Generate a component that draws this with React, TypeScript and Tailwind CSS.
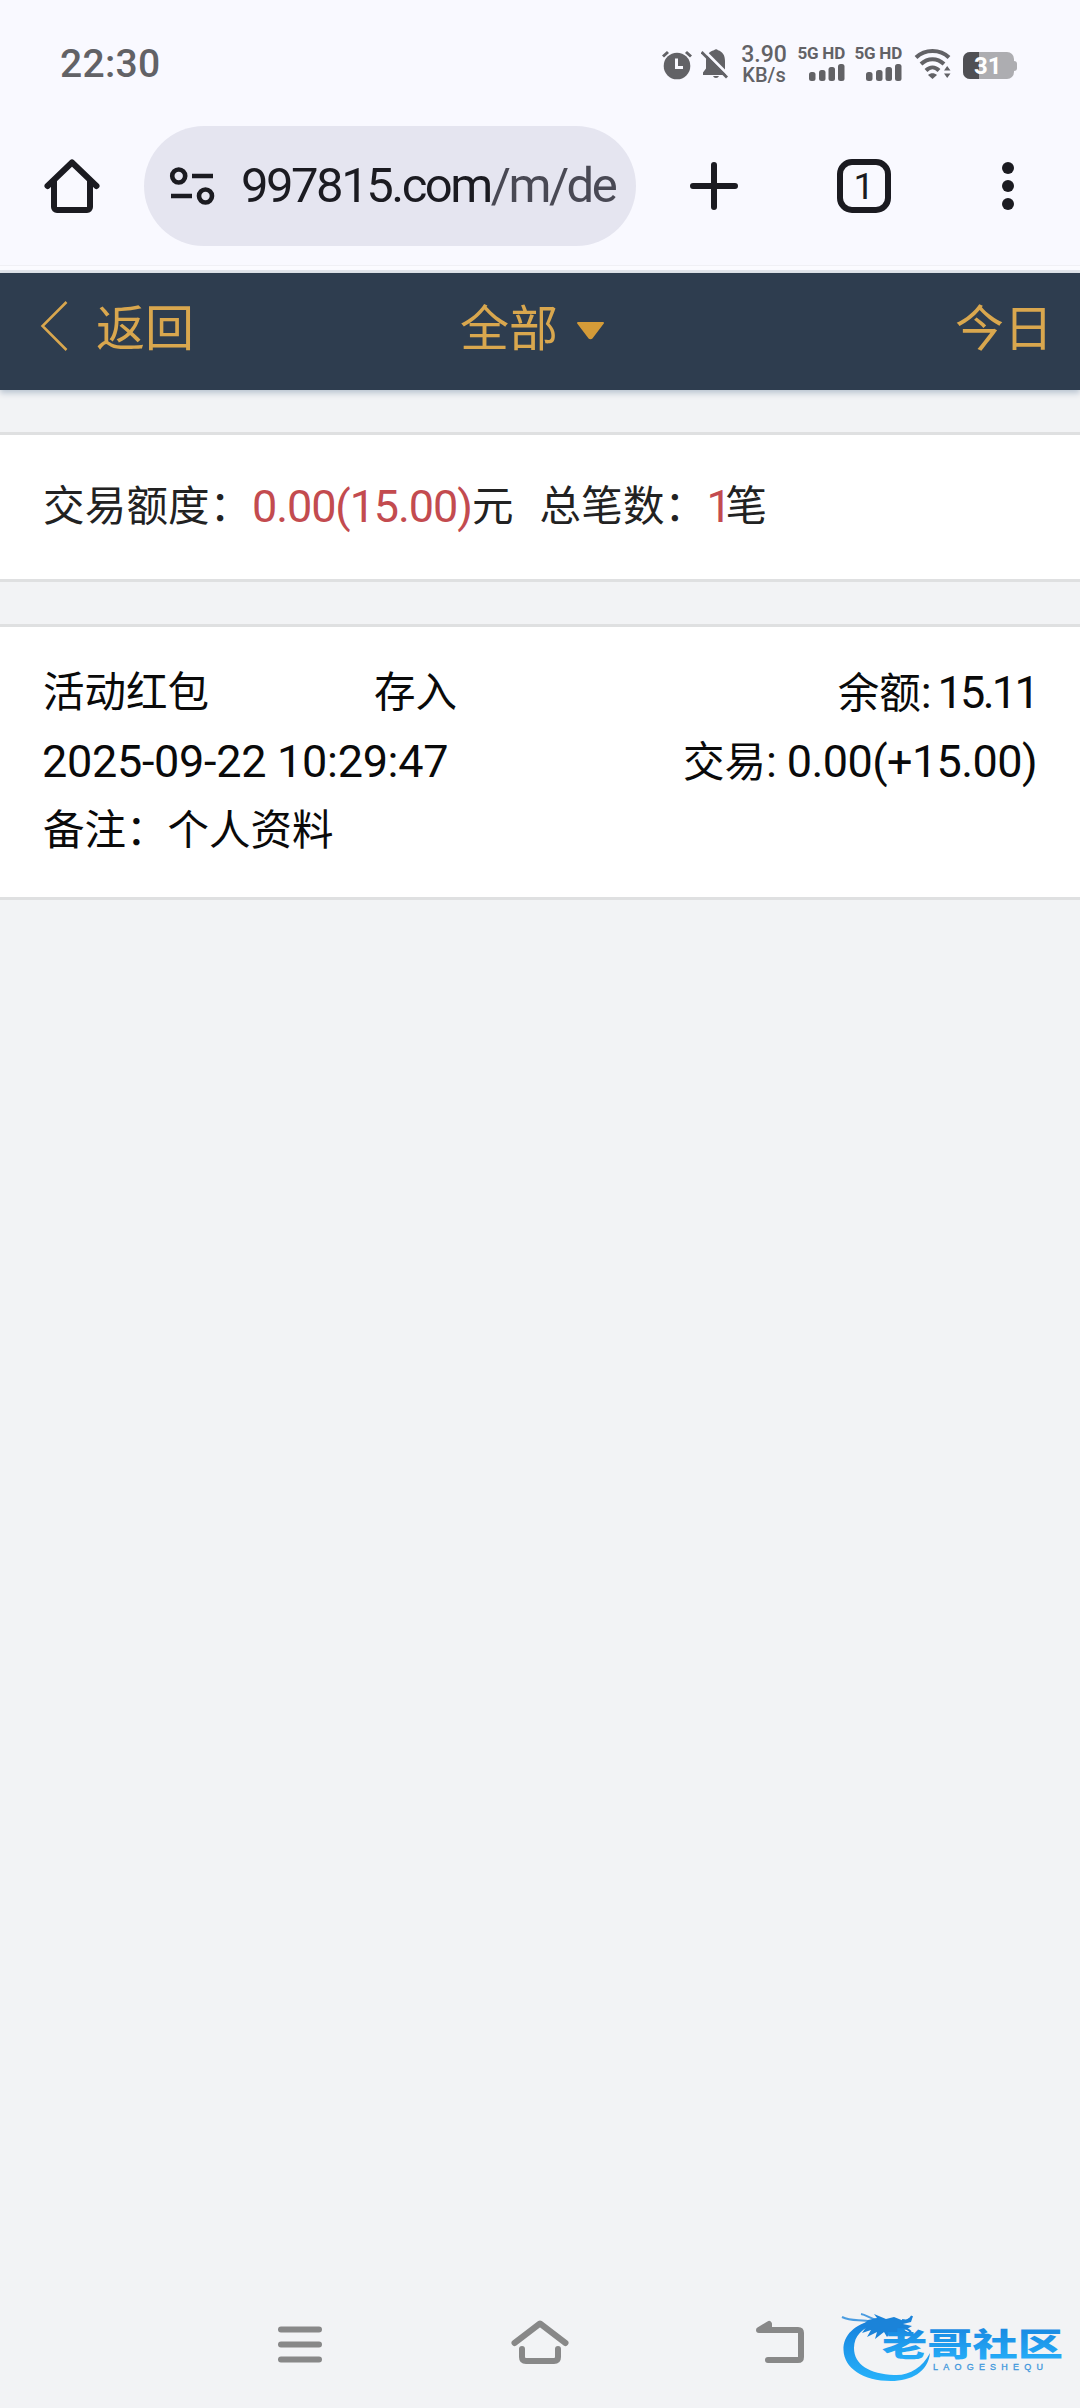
import type { ReactNode } from "react";

type Transaction = {
  type: string;
  direction: string;
  balance: string;
  time: string;
  amount: string;
  remark: string;
};

const transactions: Transaction[] = [
  {
    type: "活动红包",
    direction: "存入",
    balance: "15.11",
    time: "2025-09-22 10:29:47",
    amount: "0.00(+15.00)",
    remark: "个人资料",
  },
];

function App() {
  return (
    <main className="flex h-[2408px] w-[1080px] flex-col overflow-hidden bg-[#f2f3f5] font-[Roboto,'Noto_Sans_CJK_SC',sans-serif]">
      <StatusBar />
      <BrowserBar />
      <PageHeader />
      <Summary />
      {transactions.map((t) => (
        <TransactionRow key={t.time} item={t} />
      ))}
      <NavigationBar />
    </main>
  );
}

function StatusBar() {
  return (
    <div className="flex h-[126px] shrink-0 items-start bg-[#f9f9ff] pl-[60px] text-[#626266]">
      <span className="mt-[41px] w-[602px] text-[39px] leading-[46px] font-medium tracking-[0.3px]">22:30</span>
      <svg className="mt-[50px]" width="30" height="30" viewBox="0 0 30 30">
        <circle cx="15" cy="16" r="13.3" fill="currentColor" />
        <path d="M1 6.5 6 2M29 6.5 24 2" stroke="currentColor" strokeWidth="3" />
        <path d="M14.5 8.5v9H21" fill="none" stroke="#f9f9ff" strokeWidth="3" />
      </svg>
      <svg className="mt-[48px] ml-[9px]" width="28" height="32" viewBox="0 0 28 32">
        <path
          d="M12 28h6a3.2 3.2 0 0 1-6 0ZM2 27v-2.500l3-4V13C5 7 8.500 3 13 2.200c1.500-1.300 3-1 4 0C21.500 3.500 24 7 24 13v10l1 4Z"
          fill="currentColor"
        />
        <path d="M2.500 2 28 27.500" stroke="#f9f9ff" strokeWidth="3" />
        <path d="M.500 4 26 29.500" stroke="currentColor" strokeWidth="2.800" />
      </svg>
      <div className="mt-[44px] ml-[11px] flex w-[48px] flex-col items-center font-medium">
        <span className="text-[23px] leading-[21px]">3.90</span>
        <span className="text-[20px] leading-[21px]">KB/s</span>
      </div>
      <Signal />
      <Signal />
      <svg className="mt-[48px] ml-[12px]" width="38" height="32" viewBox="0 0 38 32" fill="none" stroke="currentColor">
        <path d="M2 9.500C11 .800 26 .800 35 9.500" strokeWidth="4" />
        <path d="M7 16C14 9.500 23 9.500 30 16" strokeWidth="4" />
        <path d="M12 22.500C16 18.500 21 18.500 25 22.500" strokeWidth="4" />
        <path d="M14 27c2.500-2.300 6.500-2.300 9 0l-4.500 4Z" fill="currentColor" stroke="none" />
        <path d="M30 22.500h6.500L33.200 18ZM30 25.500h6.500L33.200 30Z" fill="currentColor" stroke="none" />
      </svg>
      <div className="relative mt-[52px] ml-[11px] flex items-center">
        <div className="flex h-[27px] w-[51px] overflow-hidden rounded-[7px] bg-[#adadb1]">
          <div className="w-[16px] bg-[#505054]" />
        </div>
        <div className="h-[10px] w-[3px] rounded-r bg-[#adadb1]" />
        <span className="absolute top-0 left-[11px] text-[24px] leading-[28px] font-bold text-white">31</span>
      </div>
    </div>
  );
}

function Signal() {
  return (
    <div className="mt-[45px] ml-[9px] flex w-[48px] flex-col items-end first-of-type:ml-0">
      <span className="text-[17px] leading-[17px] font-bold tracking-[-0.2px] whitespace-nowrap">5G HD</span>
      <svg className="mt-[2px]" width="36" height="17" viewBox="0 0 36 17" fill="currentColor">
        <rect x="0" y="8" width="6.500" height="9" rx="2.500" />
        <rect x="10" y="6" width="6.500" height="11" rx="2.500" />
        <rect x="19.500" y="3" width="6.500" height="14" rx="2.500" />
        <rect x="29" y="0" width="6.500" height="17" rx="2.500" />
      </svg>
    </div>
  );
}

function BrowserBar() {
  return (
    <div className="h-[147px] shrink-0 border-b-[3px] border-[#e1e5ea] bg-[#f9f9ff]">
      <div className="flex h-[120px] items-center text-[#1b1b21]">
        <svg className="ml-[44px]" width="56" height="56" viewBox="0 0 56 56" fill="none" stroke="currentColor">
          <path d="M3.500 28 28 4.500 52.500 28" strokeWidth="6" strokeLinecap="round" strokeLinejoin="round" />
          <path d="M10 22v27a3 3 0 0 0 3 3h30a3 3 0 0 0 3-3V22" strokeWidth="6" />
        </svg>
        <div className="ml-[44px] flex h-[120px] w-[492px] items-center rounded-full bg-[#e5e5f0] pl-[25px]">
          <svg width="46" height="40" viewBox="0 0 46 40" fill="none" stroke="currentColor" strokeWidth="4.600">
            <circle cx="9.700" cy="10" r="6.500" />
            <path d="M23 10h21M2 30h21" />
            <circle cx="36.500" cy="30" r="6.500" />
          </svg>
          <span className="ml-[26px] text-[49px] leading-[60px] tracking-[-2.500px] whitespace-nowrap">
            997815.com<span className="text-[#494954]">/m/de</span>
          </span>
        </div>
        <svg className="ml-[53px]" width="50" height="50" viewBox="0 0 50 50">
          <path d="M4 25h42M25 4v42" stroke="currentColor" strokeWidth="6" strokeLinecap="round" />
        </svg>
        <div className="ml-[98px] flex h-[54px] w-[54px] items-center justify-center rounded-[15px] border-[6px] border-current text-[37px] leading-none">
          1
        </div>
        <svg className="ml-[111px]" width="12" height="48" viewBox="0 0 12 48" fill="currentColor">
          <circle cx="6" cy="6" r="6" />
          <circle cx="6" cy="24" r="6" />
          <circle cx="6" cy="42" r="6" />
        </svg>
      </div>
      <div className="mt-[19px] h-[5px] border-t border-[#f0f0f5] bg-[#fbfbff]" />
    </div>
  );
}

function PageHeader() {
  return (
    <header className="flex h-[117px] shrink-0 bg-[#2e3d4f] text-[49px] leading-[114px] text-[#d9a74e] shadow-[0_3px_6px_#b8c3d0]">
      <div className="flex w-[460px] items-start">
        <svg className="mt-[27px] ml-[40px]" width="28" height="52" viewBox="0 0 28 52">
          <path d="M26.500 2 2.500 26l24 24" fill="none" stroke="currentColor" strokeWidth="2.500" />
        </svg>
        <span className="ml-[28px]">返回</span>
      </div>
      <span>全部</span>
      <svg className="mt-[49px] ml-[18px]" width="29" height="18" viewBox="0 0 29 18">
        <path d="M2 1h25l-11 14.500q-1.500 1.500-3 0Z" fill="#d49b38" stroke="#d49b38" strokeWidth="2" strokeLinejoin="round" />
      </svg>
      <span className="mr-[27px] ml-auto">今日</span>
    </header>
  );
}

function Panel({ children, className }: { children: ReactNode; className: string }) {
  return (
    <section className={"mt-[42px] shrink-0 border-y-[3px] border-[#dfe0e1] bg-white px-[43px] text-[41.500px] " + className}>
      {children}
    </section>
  );
}

function Summary() {
  return (
    <Panel className="flex h-[150px] items-center text-[#222]">
      <span className="w-[209px] tracking-[0.2px] whitespace-nowrap">交易额度：</span>
      <span className="w-[220px] text-[45px] tracking-[-1.1px] text-[#c34b4f]">0.00(15.00)</span>
      <span>元</span>
      <span className="ml-[26px] w-[167px] tracking-[0.2px] whitespace-nowrap">总笔数：</span>
      <span className="w-[19px] text-[45px] tracking-[-6.500px] text-[#c34b4f]">1</span>
      <span>笔</span>
    </Panel>
  );
}

function TransactionRow({ item }: { item: Transaction }) {
  return (
    <Panel className="h-[276px] pt-[31px] leading-[69px] text-[#0a0a0a]">
      <div className="flex h-[69px]">
        <span className="w-[331px]">{item.type}</span>
        <span>{item.direction}</span>
        <span className="ml-auto">
          余额<span className="text-[45px] tracking-[-2.700px]">: {item.balance}</span>
        </span>
      </div>
      <div className="flex h-[69px] justify-between">
        <span className="-ml-[1px] text-[45px] tracking-[-0.3px]">{item.time}</span>
        <span>
          交易<span className="text-[45px] tracking-[-0.600px]">: {item.amount}</span>
        </span>
      </div>
      <div className="h-[69px]">备注：{item.remark}</div>
    </Panel>
  );
}

function NavigationBar() {
  return (
    <nav className="relative mt-auto flex h-[126px] shrink-0 items-center text-[#888]">
      <svg className="ml-[277px]" width="46" height="44" viewBox="0 0 46 44">
        <path d="M4 6.500h38M4 21.500h38M4 36.500h38" stroke="currentColor" strokeWidth="6" strokeLinecap="round" />
      </svg>
      <svg
        className="mb-[7px] ml-[188px]"
        width="58"
        height="44"
        viewBox="0 0 58 44"
        fill="none"
        stroke="currentColor"
        strokeWidth="6"
        strokeLinecap="round"
        strokeLinejoin="round"
      >
        <path d="M3.500 23 29 3.500 54.500 23M11 29v8q0 4 4 4h28q4 0 4-4v-8" />
      </svg>
      <svg
        className="mb-[6px] ml-[187px]"
        width="48"
        height="44"
        viewBox="0 0 48 44"
        fill="none"
        stroke="currentColor"
        strokeWidth="6"
        strokeLinecap="round"
        strokeLinejoin="round"
      >
        <path d="M12 40h30q3 0 3-3V13q0-3-3-3H3l10-6v4" />
      </svg>
      <CommunityLogo />
    </nav>
  );
}

function CommunityLogo() {
  return (
    <svg className="absolute top-[29px] left-[840px]" width="226" height="76" viewBox="0 0 226 76">
      <defs>
        <linearGradient id="dragon" x1="0" y1="0" x2="0" y2="1">
          <stop offset="0" stopColor="#1680dc" />
          <stop offset="1" stopColor="#27b2fb" />
        </linearGradient>
      </defs>
      <path
        d="M34 9C15 13 3 24 3.500 39 4 57 23 70 51 70c20 0 37-9 39-28-8 15-21 23-36 22C30 63 14 54 14 37 14 25 22 16 38 13Z"
        fill="url(#dragon)"
      />
      <path d="M2 6c10 5 18 2 30 5M21 3c6 1 9 5 17 6" fill="none" stroke="#4b9ce0" strokeWidth="2" />
      <path
        d="M28 9l9-2-3-4 12 5 8-2 10 4 9-5-2 6-8 2 9 2-5 3-7-1 10 5-11 1-8-2-4 5-3-5-9 7 2-7-10 5 4-7-9 3 5-7-8 1 6-4Z"
        fill="#1b83d9"
      />
      <path d="M62 9c4 1 7 1 10-4M60 18c5-2 8 0 11 3" fill="none" stroke="#1b83d9" strokeWidth="2" />
      <text
        x="42"
        y="45"
        fontFamily="'Noto Sans CJK SC', sans-serif"
        fontSize="32"
        fontWeight="900"
        fill="url(#dragon)"
        textLength="181"
        lengthAdjust="spacingAndGlyphs"
      >
        老哥社区
      </text>
      <text
        x="93"
        y="59"
        fontFamily="'Liberation Sans', sans-serif"
        fontSize="9"
        fill="#3f98dc"
        stroke="#3f98dc"
        strokeWidth="0.300"
        textLength="110"
        lengthAdjust="spacing"
      >
        LAOGESHEQU
      </text>
    </svg>
  );
}

export default App;
